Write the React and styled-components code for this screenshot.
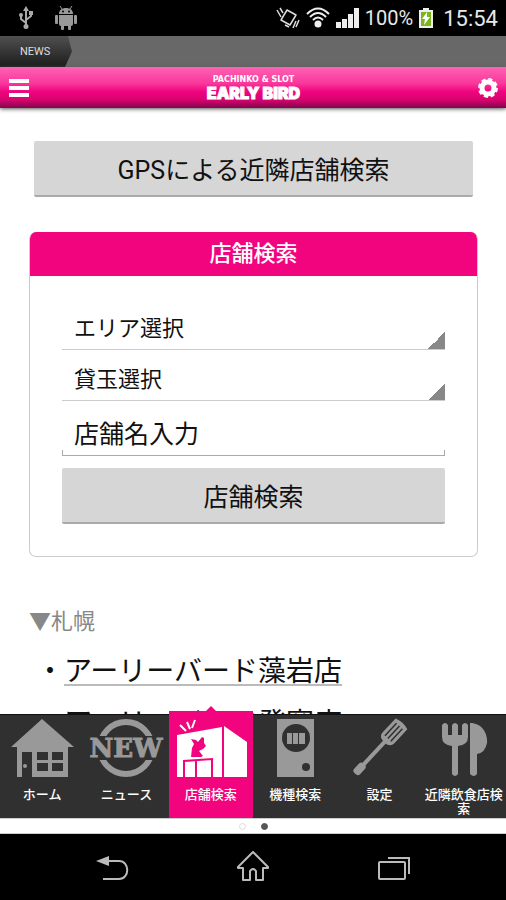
import styled, { createGlobalStyle } from "styled-components";

const PINK = "#f2047f";
const DARK = "#303030";
const GREY = "#999";

const shops = ["アーリーバード藻岩店", "アーリーバード発寒店"];

const tabs = [
  { label: "ホーム", Icon: HouseIcon },
  { label: "ニュース", Icon: NewIcon },
  { label: "店舗検索", Icon: ShopIcon, active: true },
  { label: "機種検索", Icon: MachineIcon },
  { label: "設定", Icon: SpatulaIcon },
  { label: "近隣飲食店検索", Icon: CutleryIcon },
];

export default function App() {
  return (
    <Screen>
      <GlobalStyle />
      <StatusBar>
        <StatusGroup $gap="21px">
          <UsbIcon />
          <AndroidIcon />
        </StatusGroup>
        <StatusGroup $gap="6px">
          <VibrateIcon />
          <WifiIcon />
          <SignalIcon />
          <Percent>100%</Percent>
          <BatteryIcon />
          <Clock>15:54</Clock>
        </StatusGroup>
      </StatusBar>

      <NewsBar>
        <NewsTag>NEWS</NewsTag>
      </NewsBar>

      <Header>
        <HeaderButton aria-label="メニュー">
          <svg width="20" height="18" viewBox="0 0 20 18">
            <path d="M0 2h20M0 9h20M0 16h20" stroke="#fff" strokeWidth="4" />
          </svg>
        </HeaderButton>
        <Logo>
          <LogoTop>PACHINKO &amp; SLOT</LogoTop>
          <LogoName>EARLY BIRD</LogoName>
        </Logo>
        <HeaderButton aria-label="設定">
          <GearIcon />
        </HeaderButton>
      </Header>

      <Main>
        <GpsArea>
          <GreyButton>GPSによる近隣店舗検索</GreyButton>
        </GpsArea>

        <Card>
          <CardTitle>店舗検索</CardTitle>
          <Form onSubmit={(e) => e.preventDefault()}>
            <Select aria-label="エリア選択">
              <option>エリア選択</option>
            </Select>
            <Select aria-label="貸玉選択">
              <option>貸玉選択</option>
            </Select>
            <Field>
              <Input aria-label="店舗名入力" placeholder="店舗名入力" />
            </Field>
            <GreyButton>店舗検索</GreyButton>
          </Form>
        </Card>

        <AreaTitle>▼札幌</AreaTitle>
        <ShopList>
          {shops.map((shop) => (
            <li key={shop}>
              ・<ShopLink href="#">{shop}</ShopLink>
            </li>
          ))}
        </ShopList>
      </Main>

      <TabBar>
        {tabs.map(({ label, Icon, active }) => (
          <Tab key={label} $active={active}>
            <Icon />
            <TabLabel>{label}</TabLabel>
          </Tab>
        ))}
      </TabBar>

      <Pager>
        <Dot />
        <Dot $on />
      </Pager>

      <SystemBar>
        <SystemButton aria-label="戻る">
          <svg width="34" height="32" viewBox="0 0 34 32" fill="none" stroke="#bbb" strokeWidth="2">
            <path d="M12 10h12c11 0 11 18 0 18H8" />
            <path d="M1 10l13-5v10z" fill="#bbb" stroke="none" />
          </svg>
        </SystemButton>
        <SystemButton aria-label="ホーム">
          <svg width="34" height="32" viewBox="0 0 34 32" fill="none" stroke="#bbb" strokeWidth="2">
            <path d="M17 1L2 16v1h5v12h7V20q3-4 6 0v9h7V17h5v-1z" strokeLinejoin="round" />
          </svg>
        </SystemButton>
        <SystemButton aria-label="履歴">
          <svg width="34" height="32" viewBox="0 0 34 32" fill="none" stroke="#bbb" strokeWidth="2">
            <rect x="2" y="11" width="26" height="17" rx="1" />
            <path d="M11 7h21v16" />
          </svg>
        </SystemButton>
      </SystemBar>
    </Screen>
  );
}

function UsbIcon() {
  return (
    <svg width="16" height="24" viewBox="0 0 16 24" fill="none" stroke="#aaa" strokeWidth="2">
      <path d="M8 4v16M8 17l-5-4V9M8 14l5-4V6" />
      <path d="M8 0l3 5H5z" fill="#aaa" stroke="none" />
      <circle cx="8" cy="20.500" r="2.500" fill="#aaa" stroke="none" />
      <circle cx="3" cy="9" r="2" fill="#aaa" stroke="none" />
      <path d="M11 5h4v4h-4z" fill="#aaa" stroke="none" />
    </svg>
  );
}

function AndroidIcon() {
  return (
    <svg width="22" height="24" viewBox="0 0 22 24" fill="#999">
      <path d="M4 8c0-4 3-6 7-6s7 2 7 6z" />
      <path d="M7 3L5 0M15 3l2-3" stroke="#999" />
      <path d="M4 9h14v9q0 2-2 2H6q-2 0-2-2z" />
      <rect x="0" y="9" width="3" height="9" rx="1" />
      <rect x="19" y="9" width="3" height="9" rx="1" />
      <rect x="6" y="18" width="3" height="6" rx="1" />
      <rect x="13" y="18" width="3" height="6" rx="1" />
      <circle cx="8" cy="5.500" r="1" fill="#000" />
      <circle cx="14" cy="5.500" r="1" fill="#000" />
    </svg>
  );
}

function VibrateIcon() {
  return (
    <svg width="24" height="22" viewBox="0 0 24 22" fill="none" stroke="#ddd" strokeWidth="1.500">
      <path d="M11 3l9 5-6 10-9-5z" strokeLinejoin="round" />
      <path d="M1 3l4 7M4 1l3 5M23 13l-3 7M20 14l-3 7M9 18l4 2" />
    </svg>
  );
}

function WifiIcon() {
  return (
    <svg width="24" height="22" viewBox="0 0 24 22" fill="none" stroke="#eee" strokeWidth="2">
      <path d="M1 7q11-11 22 0M4 10q8-8 16 0M7 13q5-5 10 0" />
      <circle cx="12" cy="17" r="3.500" fill="#eee" stroke="none" />
    </svg>
  );
}

function SignalIcon() {
  return (
    <svg width="23" height="20" viewBox="0 0 23 20" fill="#eee">
      <path d="M0 14h5v6H0zM6 11h5v9H6zM12 6h5v14h-5zM18 0h5v20h-5z" />
    </svg>
  );
}

function BatteryIcon() {
  return (
    <svg width="14" height="20" viewBox="0 0 14 20">
      <path d="M4 0h6v2h4v18H0V2h4z" fill="#eee" />
      <path d="M2 4h10v14H2z" fill="#7ab51d" />
      <path d="M8 4l-5 7h3l-1 6 6-8H8z" fill="#fff" />
    </svg>
  );
}

function GearIcon() {
  return (
    <svg width="20" height="20" viewBox="0 0 20 20" fill="none" stroke="#fff">
      <circle cx="10" cy="10" r="6" strokeWidth="5" />
      <circle cx="10" cy="10" r="8.500" strokeWidth="3" strokeDasharray="4 2.670" />
    </svg>
  );
}

function HouseIcon() {
  return (
    <TabSvg viewBox="0 0 84 64" fill={GREY}>
      <path d="M42 3L74 31H11z" />
      <path d="M17 31h51v30H32V36H22v25h-5z" />
      <path d="M37 36h11v8H37zM52 36h11v8H52zM37 47h11v8H37zM52 47h11v8H52z" fill={DARK} />
      <circle cx="25" cy="50" r="2" />
    </TabSvg>
  );
}

function NewIcon() {
  return (
    <TabSvg viewBox="0 0 84 64" fill={GREY}>
      <circle cx="42" cy="32" r="26" fill="none" stroke={GREY} strokeWidth="6" />
      <path d="M8 20h68v24H8z" fill={DARK} />
      <text
        x="42"
        y="41"
        textAnchor="middle"
        fontFamily="DejaVu Serif, serif"
        fontWeight="700"
        fontSize="26"
        stroke={GREY}
      >
        NEW
      </text>
    </TabSvg>
  );
}

function ShopIcon() {
  return (
    <TabSvg viewBox="0 0 84 64" fill="#fff">
      <path d="M8 19L53 11V61H8zM55 10L78 26V61H55z" />
      <path d="M11 9l6 6M18 6l3 7M26 4l-3 8" stroke="#fff" strokeWidth="2" />
      <path
        d="M15 61V45L43 43V61M27 45V61"
        fill="none"
        stroke={PINK}
        strokeWidth="2"
      />
      <path d="M22 23l5 1 2 2 4-5 2 1v5l2 3-3 3-4 2 4 5-2 1h-10l1-9 2-4z" fill={PINK} />
    </TabSvg>
  );
}

function MachineIcon() {
  return (
    <TabSvg viewBox="0 0 84 64" fill={GREY}>
      <rect x="24" y="3" width="37" height="58" />
      <circle cx="43" cy="22" r="14" fill={DARK} />
      <path d="M34 17h5v11h-5zM40 17h5v11h-5zM46 17h6v11h-6z" />
      <circle cx="53" cy="51" r="4" fill={DARK} />
    </TabSvg>
  );
}

function SpatulaIcon() {
  return (
    <TabSvg viewBox="0 0 84 64" fill={GREY}>
      <g transform="rotate(43 42 32)">
        <path d="M34 -1q8-3 16 0v19q0 5-5 6h-6q-5-1-5-6z" />
        <path d="M38 2v17M42 2v17M46 2v17" stroke={DARK} strokeWidth="1.500" />
        <path d="M40 22h4v36h-4z" />
        <rect x="38" y="54" width="8" height="13" rx="3" />
      </g>
    </TabSvg>
  );
}

function CutleryIcon() {
  return (
    <TabSvg viewBox="0 0 84 64" fill={GREY}>
      <path d="M20 9q3-4 6 0v10h4V9q3-4 6 0v10h4V9q3-4 6 0v12q0 8-10 9v28q-3 4-6 0V30q-10-1-10-9z" />
      <path d="M48 7c13 0 18 12 17 20q-2 10-10 11v20q-3 4-7 0z" />
    </TabSvg>
  );
}

const GlobalStyle = createGlobalStyle`
  * {
    box-sizing: border-box;
  }
  body {
    margin: 0;
    background: #fff;
    color: #111;
    font-family: Roboto, "Noto Sans CJK JP", sans-serif;
  }
  button, input, select {
    font-family: inherit;
    color: inherit;
  }
`;

const Screen = styled.div`
  display: flex;
  flex-direction: column;
  height: 100vh;
  overflow: hidden;
`;

const StatusBar = styled.div`
  display: flex;
  justify-content: space-between;
  align-items: center;
  height: 36px;
  padding: 0 8px 0 18px;
  background: #000;
  color: #e8e8e8;
  flex-shrink: 0;
`;

const StatusGroup = styled.div`
  display: flex;
  align-items: center;
  gap: ${(props) => props.$gap};
`;

const Percent = styled.span`
  font-size: 20px;
`;

const Clock = styled.span`
  margin-left: 4px;
  font-size: 22px;
`;

const NewsBar = styled.div`
  display: flex;
  height: 31px;
  background: #686868;
  flex-shrink: 0;
`;

const NewsTag = styled.div`
  width: 72px;
  padding-left: 20px;
  font-size: 11px;
  line-height: 32px;
  color: #ddd;
  background: linear-gradient(#505050, #1c1c1c);
  clip-path: polygon(0 0, 68px 0, 100% 50%, 65px 100%, 0 100%);
`;

const Header = styled.header`
  display: flex;
  justify-content: space-between;
  align-items: center;
  height: 41px;
  padding: 0 8px 0 9px;
  background: linear-gradient(#ff62b4, #f9379b 40%, #f0047f 60%, #d8046f 80%, #80064b);
  box-shadow: 0 1px 4px #555;
  z-index: 1;
  flex-shrink: 0;
`;

const HeaderButton = styled.button`
  display: flex;
  padding: 0;
  border: 0;
  background: none;
`;

const Logo = styled.div`
  display: flex;
  flex-direction: column;
  align-items: center;
  color: #fff;
`;

const LogoTop = styled.span`
  font: 700 8px/10px "DejaVu Sans", sans-serif;
`;

const LogoName = styled.span`
  font: 900 16px/16px Inter, sans-serif;
  -webkit-text-stroke: 1px #fff;
`;

const Main = styled.main`
  flex: 1;
  min-height: 0;
  padding: 33px 28px 0 29px;
  overflow: hidden;
`;

const GpsArea = styled.div`
  padding: 0 5px;
  margin-bottom: 35px;
`;

const GreyButton = styled.button`
  display: block;
  width: 100%;
  height: 56px;
  padding: 0;
  border: 0;
  border-bottom: 2px solid #aaa;
  border-radius: 2px;
  background: #d6d6d6;
  font-size: 25px;
`;

const Card = styled.section`
  border: 1px solid #ccc;
  border-top: 0;
  border-radius: 7px;
  overflow: hidden;
`;

const CardTitle = styled.h2`
  margin: 0 -1px;
  background: ${PINK};
  color: #fff;
  font-size: 22px;
  font-weight: 500;
  line-height: 44px;
  text-align: center;
`;

const Form = styled.form`
  padding: 23px 32px 32px;
`;

const Select = styled.select`
  display: block;
  width: 100%;
  height: 51px;
  padding: 8px 24px 0 12px;
  border: 0;
  border-bottom: 1px solid #ccc;
  border-radius: 0;
  appearance: none;
  background: linear-gradient(135deg, transparent 50%, #888 50%) right bottom / 17px 17px no-repeat;
  font-size: 22px;
`;

const Field = styled.div`
  height: 55px;
  margin-bottom: 12px;
  background:
    linear-gradient(#aaa, #aaa) left bottom / 1px 5px no-repeat,
    linear-gradient(#aaa, #aaa) right bottom / 1px 5px no-repeat;
  border-bottom: 1px solid #aaa;
`;

const Input = styled.input`
  width: 100%;
  height: 54px;
  padding: 12px 12px 0;
  border: 0;
  background: none;
  font-size: 25px;

  &::placeholder {
    color: #111;
  }
`;

const AreaTitle = styled.h3`
  margin: 49px 0 0;
  color: #888;
  font-size: 22px;
  font-weight: 400;
  line-height: 32px;
`;

const ShopList = styled.ul`
  margin: 8px 0 0;
  padding: 0 0 0 7px;
  list-style: none;
  font-size: 28px;
  line-height: 52px;
  white-space: nowrap;
`;

const ShopLink = styled.a`
  color: #111;
  text-decoration: underline 2px #bbb;
  text-underline-offset: 3px;
`;

const TabBar = styled.nav`
  display: flex;
  height: 104px;
  background: ${DARK};
  border-top: 1px solid #111;
  z-index: 1;
  flex-shrink: 0;
`;

const Tab = styled.button`
  position: relative;
  display: flex;
  flex: 1 1 0;
  flex-direction: column;
  align-items: center;
  min-width: 0;
  margin-top: ${(props) => (props.$active ? "-4px" : "0")};
  padding: ${(props) => (props.$active ? "5px" : "1px")} 0 0;
  border: 0;
  background: ${(props) => (props.$active ? PINK : "none")};
  color: #fff;

  &::before {
    content: "";
    display: ${(props) => (props.$active ? "block" : "none")};
    position: absolute;
    top: -5px;
    left: calc(50% - 6px);
    border: 6px solid transparent;
    border-top: 0;
    border-bottom-color: ${PINK};
  }
`;

const TabSvg = styled.svg`
  width: 84px;
  height: 64px;
  overflow: visible;
  flex-shrink: 0;
`;

const TabLabel = styled.span`
  margin-top: 8px;
  font-size: 13px;
  font-weight: 500;
  line-height: 14px;
`;

const Pager = styled.div`
  display: flex;
  justify-content: center;
  align-items: center;
  gap: 15px;
  height: 16px;
  border-top: 1px solid #ccc;
  border-bottom: 1px solid #ccc;
  background: #fff;
  flex-shrink: 0;
`;

const Dot = styled.span`
  width: 7px;
  height: 7px;
  border: 1px solid ${(props) => (props.$on ? "#555" : "#ddd")};
  border-radius: 50%;
  background: ${(props) => (props.$on ? "#555" : "#fff")};
`;

const SystemBar = styled.div`
  display: flex;
  height: 66px;
  padding: 0 42px;
  background: #000;
  flex-shrink: 0;
`;

const SystemButton = styled.button`
  display: flex;
  flex: 1;
  justify-content: center;
  align-items: center;
  padding: 0;
  border: 0;
  background: none;
`;
